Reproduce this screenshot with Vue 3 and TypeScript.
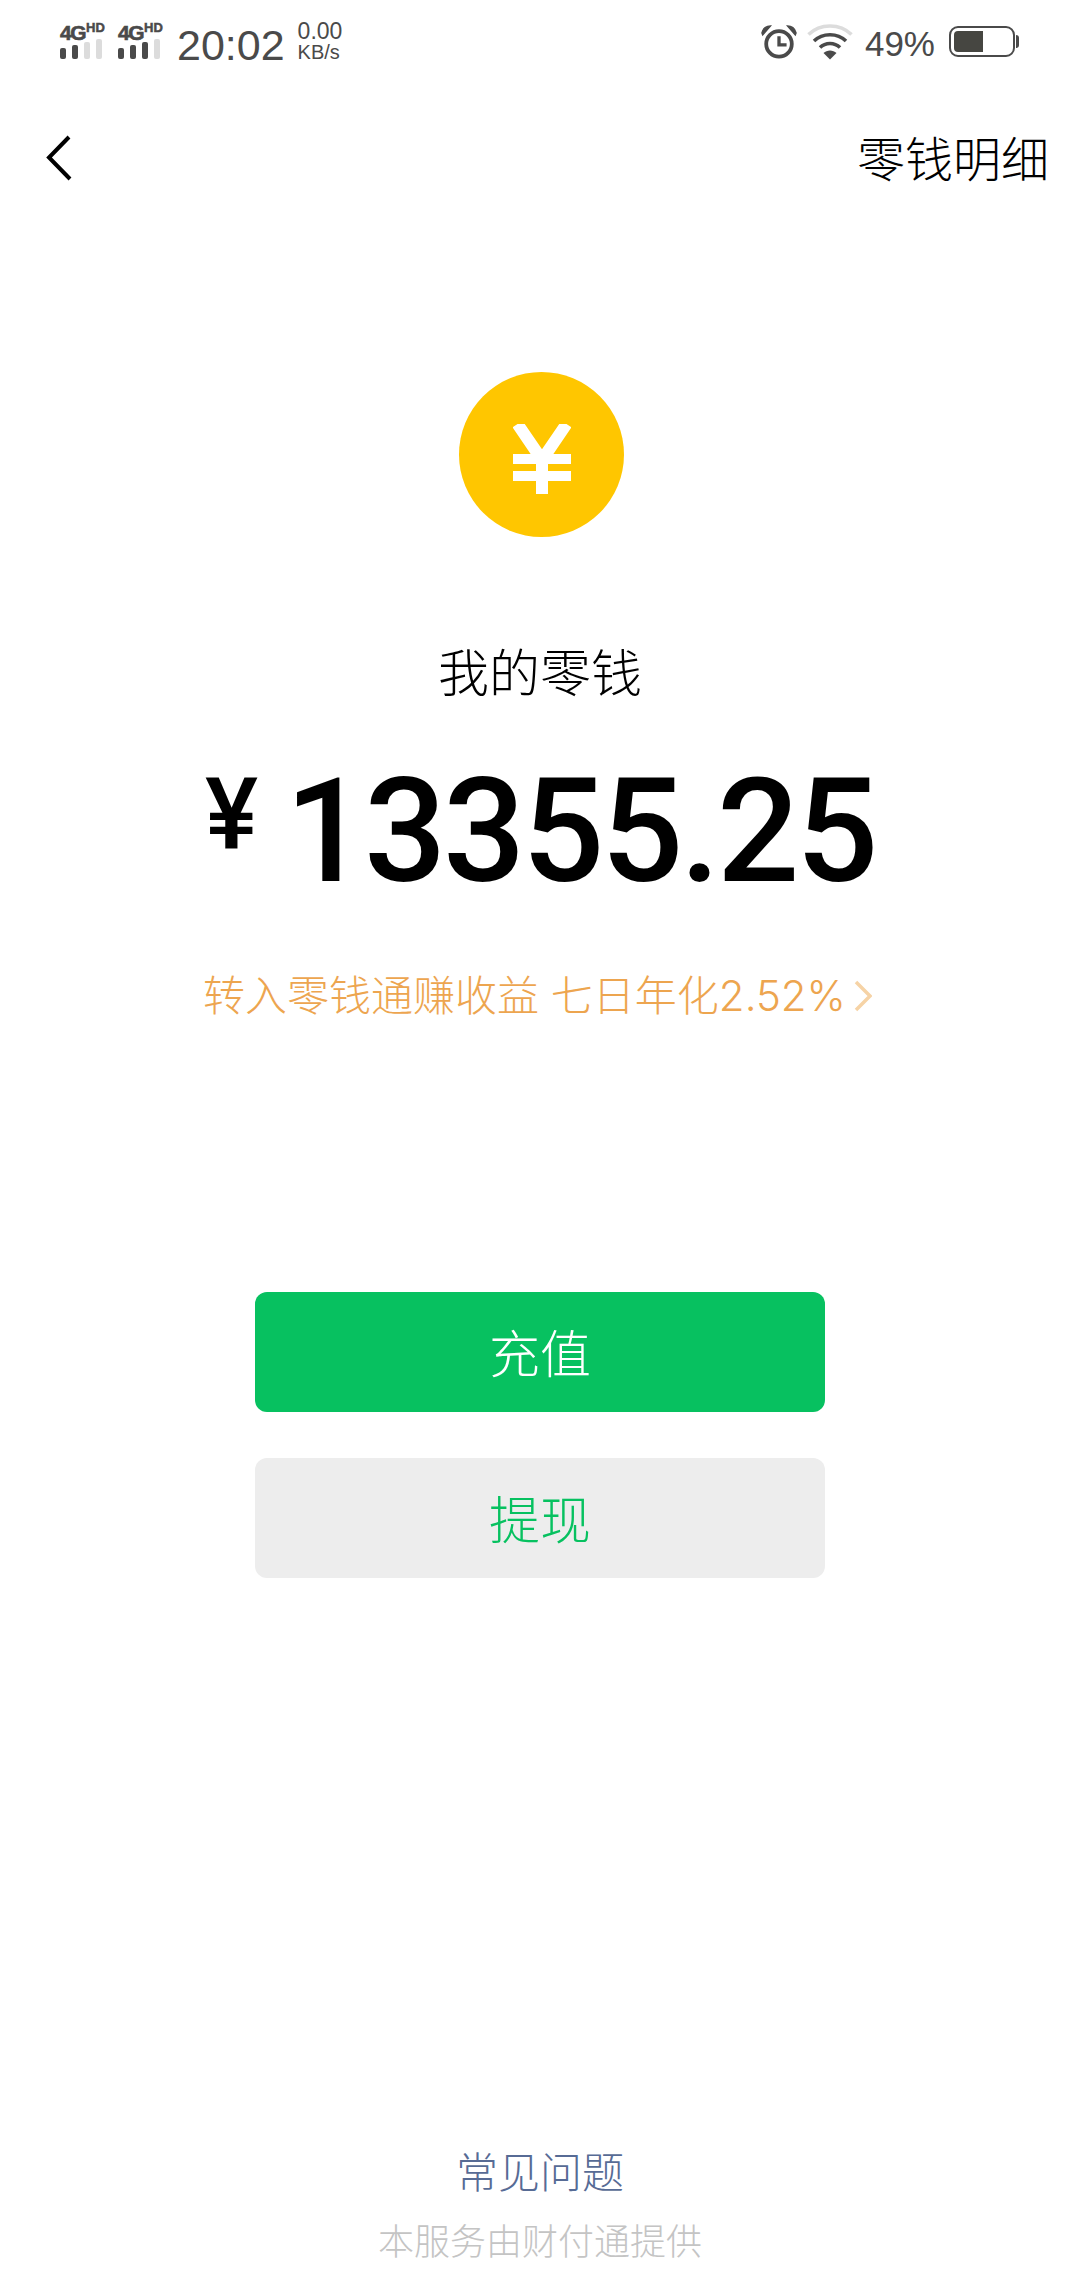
<script setup lang="ts">
const bars = [
  [true, true, false, false],
  [true, true, true, false],
]
</script>

<template>
  <div class="page">
    <div class="status">
      <div v-for="(sim, i) in bars" :key="i" class="sim">
        <div class="net"><span class="g">4G</span><span class="hd">HD</span></div>
        <div class="bars">
          <i v-for="(on, j) in sim" :key="j" :class="{ on }"></i>
        </div>
      </div>
      <span class="time">20:02</span>
      <div class="speed"><span>0.00</span><span class="unit">KB/s</span></div>
      <div class="spacer"></div>
      <svg class="alarm" width="36" height="36" viewBox="0 0 38 36">
        <circle cx="19" cy="20" r="13.5" fill="none" stroke="#4a4a4a" stroke-width="4" />
        <path d="M19 12v9h8" fill="none" stroke="#4a4a4a" stroke-width="3.5" />
        <path d="M1 8.5C2 3.500 6 1 10 1L1.800 10.500zM37 8.500C36 3.500 32 1 28 1L36.200 10.500z" fill="#4a4a4a" stroke="#4a4a4a" stroke-width="1.500" />
      </svg>
      <svg class="wifi" width="46" height="36" viewBox="0 0 46 36">
        <path d="M1.500 10.500C13 -1 33 -1 44.500 10.500" fill="none" stroke="#dcdcdc" stroke-width="3.500" />
        <path d="M7 17C15.500 8.500 30.500 8.500 39 17" fill="none" stroke="#4a4a4a" stroke-width="3.500" />
        <path d="M13 23.500C18.500 18 27.500 18 33 23.500" fill="none" stroke="#4a4a4a" stroke-width="3.500" />
        <path d="M16.500 29C20 25.500 26 25.500 29.500 29L23 35.500z" fill="#4a4a4a" />
      </svg>
      <span class="pct">49%</span>
      <div class="battery">
        <div class="shell"><div class="fill"></div></div>
        <div class="nub"></div>
      </div>
    </div>

    <div class="nav">
      <svg width="26" height="46" viewBox="0 0 26 46">
        <path d="M23 2 3 22.500 24 44" fill="none" stroke="#000" stroke-width="4" />
      </svg>
      <span class="detail">零钱明细</span>
    </div>

    <div class="coin">
      <svg width="58" height="70" viewBox="0 0 58 70">
        <path d="M4.500 0 29 36 53.500 0M29 34v36" fill="none" stroke="#fff" stroke-width="12" />
        <path d="M0 35h58M0 52h58" fill="none" stroke="#fff" stroke-width="10" />
      </svg>
    </div>

    <div class="label">我的零钱</div>

    <div class="amount">
      <span class="sign">¥</span>
      <span class="num">13355.25</span>
    </div>

    <div class="promo">
      <span>转入零钱通赚收益 七日年化2.52%</span>
      <svg width="18" height="32" viewBox="0 0 18 32">
        <path d="M2 2 16 16 2 30" fill="none" stroke="#f6d3a6" stroke-width="3.500" />
      </svg>
    </div>

    <button class="btn green">充值</button>
    <button class="btn gray">提现</button>

    <div class="spacer"></div>

    <div class="faq">常见问题</div>
    <div class="provider">本服务由财付通提供</div>
  </div>
</template>

<style>
html,
body {
  margin: 0;
  background: #fff;
}
</style>

<style scoped>
.page {
  width: 1080px;
  height: 2280px;
  overflow: hidden;
  display: flex;
  flex-direction: column;
  align-items: center;
  background: #fff;
  font-family: "Noto Sans CJK SC", "Liberation Sans", sans-serif;
}
.spacer {
  flex: 1;
}
.status {
  width: 100%;
  height: 64px;
  box-sizing: border-box;
  padding: 21px 61px 0 60px;
  display: flex;
  align-items: flex-start;
  color: #4a4a4a;
  font-family: "Liberation Sans", sans-serif;
}
.sim {
  width: 58px;
  height: 38px;
  display: flex;
  flex-direction: column;
  justify-content: space-between;
}
.net {
  height: 17px;
  display: flex;
  align-items: flex-start;
  font-weight: 700;
  line-height: 1;
}
.g {
  font-size: 21px;
  letter-spacing: -1.5px;
  margin-top: 1px;
  -webkit-text-stroke: 0.6px #4a4a4a;
}
.hd {
  font-size: 13px;
  margin-left: 1px;
  -webkit-text-stroke: 0.5px #4a4a4a;
}
.bars {
  display: flex;
  align-items: flex-end;
  gap: 6px;
}
.bars i {
  width: 6px;
  height: 11px;
  border-radius: 2px;
  background: #dcdcdc;
}
.bars i:nth-child(2) {
  height: 14px;
}
.bars i:nth-child(3) {
  height: 17px;
}
.bars i:nth-child(4) {
  height: 20px;
}
.bars i.on {
  background: #4a4a4a;
}
.time {
  font-size: 43px;
  line-height: 48px;
  margin-left: 1px;
}
.speed {
  display: flex;
  flex-direction: column;
  margin-left: 13px;
  font-size: 23px;
  line-height: 21px;
}
.unit {
  font-size: 20px;
}
.alarm {
  margin-top: 3px;
}
.wifi {
  margin: 3px 0 0 10px;
}
.pct {
  font-size: 35px;
  line-height: 40px;
  margin: 3px 0 0 12px;
}
.battery {
  display: flex;
  align-items: center;
  margin: 5px 0 0 14px;
}
.shell {
  width: 66px;
  height: 31px;
  box-sizing: border-box;
  border: 2.500px solid #4a4a4a;
  border-radius: 9px;
  padding: 3px;
}
.fill {
  width: 29px;
  height: 100%;
  background: #464641;
  border-radius: 4px 0 0 4px;
}
.nub {
  width: 3px;
  height: 13px;
  margin-left: 1px;
  background: #4a4a4a;
  border-radius: 0 3px 3px 0;
}
.nav {
  width: 100%;
  height: 72px;
  margin-top: 58px;
  box-sizing: border-box;
  padding: 0 31px 0 46px;
  display: flex;
  align-items: center;
  justify-content: space-between;
}
.detail {
  font-size: 48px;
  font-weight: 300;
  color: #000;
  padding-bottom: 4px;
}
.coin {
  width: 165px;
  height: 165px;
  margin-top: 178px;
  margin-left: 3px;
  box-sizing: border-box;
  padding-top: 8px;
  border-radius: 50%;
  background: #ffc600;
  display: flex;
  align-items: center;
  justify-content: center;
}
.label {
  margin-top: 98px;
  font-size: 51px;
  line-height: 70px;
  font-weight: 300;
  color: #000;
}
.amount {
  margin-top: 66px;
  height: 120px;
  display: flex;
  align-items: flex-start;
  color: #000;
  font-family: Roboto, sans-serif;
  font-weight: 500;
}
.sign {
  font-size: 100px;
  line-height: 80px;
  margin-top: 4px;
}
.num {
  font-size: 145px;
  line-height: 120px;
  letter-spacing: -3.400px;
  margin-left: 27px;
}
.promo {
  margin-top: 75px;
  margin-right: 5px;
  display: flex;
  align-items: center;
  gap: 8px;
  font-family: Inter, "Noto Sans CJK SC", sans-serif;
  font-size: 42px;
  line-height: 60px;
  font-weight: 300;
  color: #eda54f;
}
.btn {
  width: 570px;
  height: 120px;
  border: 0;
  border-radius: 12px;
  font-family: inherit;
  font-size: 51px;
  font-weight: 300;
  padding: 0 0 2px;
}
.green {
  margin-top: 266px;
  background: #07c160;
  color: #fff;
}
.gray {
  margin-top: 46px;
  background: #ededed;
  color: #07c160;
}
.faq {
  font-size: 42px;
  line-height: 60px;
  font-weight: 300;
  color: #576b95;
}
.provider {
  margin-top: 14px;
  margin-bottom: 16px;
  font-size: 36px;
  line-height: 50px;
  font-weight: 300;
  color: #c4c4c4;
}
</style>
